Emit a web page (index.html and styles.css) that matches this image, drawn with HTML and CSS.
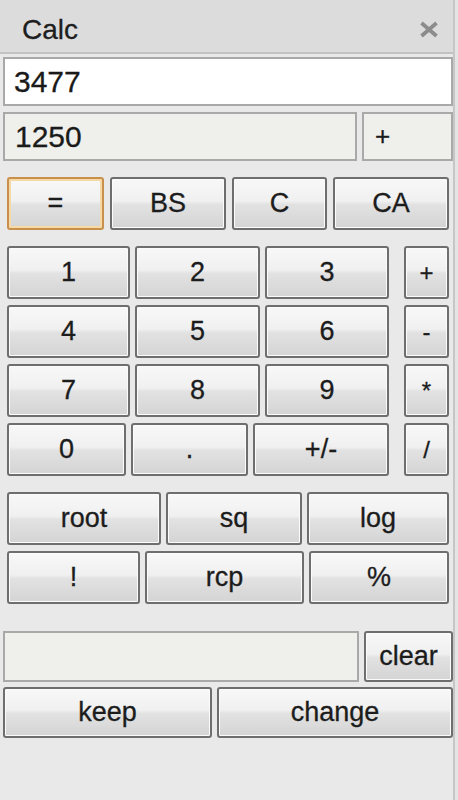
FILE: index.html
```html
<!DOCTYPE html>
<html>
<head>
<meta charset="utf-8">
<link rel="stylesheet" href="styles.css">
</head>
<body>
<div class="win">
  <div class="titlebar">
    <span class="title">Calc</span>
    <svg class="close" width="20" height="17" viewBox="0 0 20 17"><path d="M2.5 2 L17.5 15 M17.5 2 L2.5 15" stroke="#8c8c8c" stroke-width="3.8" fill="none"/></svg>
  </div>
  <div class="field main">3477</div>
  <div class="row2">
    <div class="field memo">1250</div>
    <div class="field op">+</div>
  </div>
  <div class="ctrl">
    <div class="btn def w97">=</div>
    <div class="btn w116">BS</div>
    <div class="btn w95">C</div>
    <div class="btn w116">CA</div>
  </div>
  <div class="pad">
    <div class="digits">
      <div class="drow"><div class="btn c1">1</div><div class="btn c2">2</div><div class="btn c3">3</div></div>
      <div class="drow"><div class="btn c1">4</div><div class="btn c2">5</div><div class="btn c3">6</div></div>
      <div class="drow"><div class="btn c1">7</div><div class="btn c2">8</div><div class="btn c3">9</div></div>
      <div class="drow"><div class="btn z1">0</div><div class="btn z2">.</div><div class="btn z3">+/-</div></div>
    </div>
    <div class="ops">
      <div class="btn">+</div>
      <div class="btn">-</div>
      <div class="btn">*</div>
      <div class="btn">/</div>
    </div>
  </div>
  <div class="funcs">
    <div class="drow"><div class="btn f1">root</div><div class="btn f2">sq</div><div class="btn f3">log</div></div>
    <div class="drow"><div class="btn g1">!</div><div class="btn g2">rcp</div><div class="btn g3">%</div></div>
  </div>
  <div class="row3">
    <div class="field store"></div>
    <div class="btn clear">clear</div>
  </div>
  <div class="row4">
    <div class="btn keep">keep</div>
    <div class="btn change">change</div>
  </div>
</div>
</body>
</html>
```
FILE: styles.css
```css
html, body {
  margin: 0;
  padding: 0;
  background: #e4e4e4;
}
body {
  font-family: "Liberation Sans", Arial, sans-serif;
  color: #1c1c1c;
  -webkit-text-stroke: 0.3px currentColor;
}
.win {
  width: 455px;
  height: 800px;
  box-sizing: border-box;
  background: #e9e9e9;
  border-right: 2px solid #c6c6c6;
}
.titlebar {
  height: 54px;
  background: #dcdcdc;
  border-bottom: 2px solid #c2c2c2;
  display: flex;
  align-items: center;
  justify-content: space-between;
  padding: 0 14px 0 22px;
  box-sizing: border-box;
}
.title {
  font-size: 28px;
  color: #1e1e1e;
  margin-top: 8px;
}
.close {
  margin-top: 6px;
}
.field {
  box-sizing: border-box;
  border: 2px solid #a9a9a9;
  background: #efefeb;
  font-size: 30px;
  display: flex;
  align-items: center;
  padding-left: 9px;
  color: #1a1a1a;
}
.main {
  margin: 3px 0 0 3px;
  width: 450px;
  height: 49px;
  background: #ffffff;
}
.row2 {
  display: flex;
  gap: 5px;
  margin: 6px 0 0 3px;
  height: 49px;
}
.memo { width: 354px; padding-left: 10px; }
.op { width: 91px; padding-left: 11px; font-size: 26px; }
.btn {
  box-sizing: border-box;
  height: 53px;
  border: 2px solid #6e6e6e;
  border-radius: 3px;
  background: linear-gradient(to bottom, #f8f8f8 0%, #f0f0f0 45%, #e2e2e2 52%, #d4d4d4 100%);
  box-shadow: inset 0 0 0 1px #fbfbfb;
  display: flex;
  align-items: center;
  justify-content: center;
  font-size: 27px;
  color: #1c1c1c;
}
.def {
  border-color: #c8904a;
  box-shadow: inset 0 0 0 2px #f6d9a4;
}
.ctrl {
  display: flex;
  gap: 6px;
  margin: 16px 0 0 7px;
}
.w97 { width: 97px; }
.w116 { width: 116px; }
.w95 { width: 95px; }
.pad {
  display: flex;
  margin: 16px 0 0 7px;
  gap: 15px;
}
.digits {
  width: 382px;
  display: flex;
  flex-direction: column;
  gap: 6px;
}
.drow {
  display: flex;
  gap: 5px;
}
.c1 { width: 123px; }
.c2 { width: 125px; }
.c3 { width: 124px; }
.z1 { width: 119px; }
.z2 { width: 117px; }
.z3 { width: 136px; }
.ops {
  width: 45px;
  display: flex;
  flex-direction: column;
  gap: 6px;
}
.ops .btn { font-size: 24px; }
.funcs {
  display: flex;
  flex-direction: column;
  gap: 6px;
  margin: 16px 0 0 7px;
}
.f1 { width: 154px; }
.f2 { width: 136px; }
.f3 { width: 142px; }
.g1 { width: 133px; }
.g2 { width: 159px; }
.g3 { width: 140px; }
.row3 {
  display: flex;
  gap: 5px;
  margin: 27px 0 0 3px;
}
.store { width: 356px; height: 51px; }
.clear { width: 89px; height: 51px; }
.row4 {
  display: flex;
  gap: 5px;
  margin: 5px 0 0 3px;
}
.keep { width: 209px; height: 51px; }
.change { width: 236px; height: 51px; }
```
